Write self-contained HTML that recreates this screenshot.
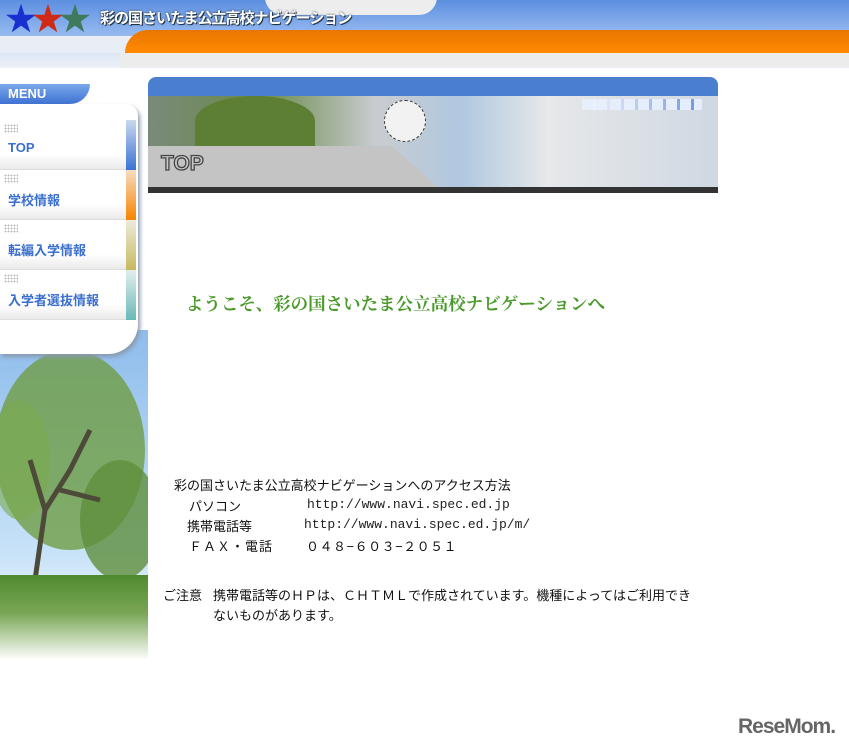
<!DOCTYPE html>
<html><head><meta charset="utf-8"><style>
*{margin:0;padding:0}
body{width:849px;height:751px;position:relative;overflow:hidden;background:#fff;font-family:"Liberation Sans","Noto Sans CJK JP",sans-serif}
.a{position:absolute}
.t{font-size:13px;color:#111;white-space:nowrap}
.m{font-family:"Liberation Mono","Noto Sans CJK JP",monospace;font-size:13px;color:#222}
.mi{left:0;width:126px;height:49px;background:linear-gradient(#fff,#fff 70%,#eaeaea);border-bottom:1px solid #ddd}
.mi span{position:absolute;left:8px;top:20px;font-size:13px;font-weight:bold;color:#3a6fcf}
.dots{position:absolute;left:4px;top:4px;width:14px;height:9px;background:radial-gradient(#bbb 40%,transparent 45%) 0 0/3px 3px}
.st{left:126px;width:10px;height:50px}
</style></head><body>
<div class="a" style="left:0;top:0;width:849px;height:68px;background:linear-gradient(#5d8fe0,#8fb5ee 45%,#c9dcf6)"></div>
<div class="a" style="left:265px;top:-20px;width:172px;height:35px;background:#ededed;border-radius:0 0 18px 18px"></div>
<div class="a" style="left:0;top:36px;width:849px;height:32px;background:#e9eef6"></div>
<div class="a" style="left:125px;top:30px;width:724px;height:23px;background:linear-gradient(#e87600,#ff8a00);border-radius:40px 0 0 0"></div>
<div class="a" style="left:100px;top:53px;width:749px;height:14px;background:#ececec"></div>
<div class="a" style="left:0;top:53px;width:120px;height:15px;background:linear-gradient(#dbe6f5,#eef2f8)"></div>
<div class="a" style="left:5px;top:3px;font-size:32px;line-height:32px;letter-spacing:-5px"><span style="color:#1a2fd0">★</span><span style="color:#cf2a16">★</span><span style="color:#3f7a5c">★</span></div>
<div class="a" style="left:100px;top:7px;font-size:15px;font-weight:bold;color:#fff;text-shadow:0 0 2px #234,1px 1px 0 #234;letter-spacing:-1px">彩の国さいたま公立高校ナビゲーション</div>
<div class="a" style="left:0;top:330px;width:148px;height:320px;background:linear-gradient(#8ebcec,#c8e2f8 70%,#fff)"></div>
<svg class="a" style="left:0;top:340px" width="148" height="320">
<defs><linearGradient id="g" x1="0" y1="0" x2="0" y2="1"><stop offset="0" stop-color="#4f8a2f"/><stop offset="0.45" stop-color="#7aa656"/><stop offset="1" stop-color="#fff"/></linearGradient></defs>
<ellipse cx="70" cy="110" rx="75" ry="100" fill="#6f9e45" opacity=".8"/>
<ellipse cx="120" cy="180" rx="40" ry="60" fill="#5f8f3c" opacity=".8"/>
<ellipse cx="20" cy="120" rx="30" ry="60" fill="#7aaa4f" opacity=".6"/>
<path d="M35 240 L45 170 L30 120 M45 170 L70 130 L90 90 M60 150 L100 160" stroke="#4d4a3a" stroke-width="5" fill="none"/>
<rect x="0" y="235" width="148" height="85" fill="url(#g)"/>
</svg>
<div class="a" style="left:0;top:80px;width:148px;height:30px;background:#fff"></div>
<div class="a" style="left:0;top:84px;width:90px;height:20px;background:linear-gradient(#7aa8ea,#3e72d2);border-radius:0 0 30px 0"></div>
<div class="a" style="left:8px;top:86px;font-size:13px;font-weight:bold;color:#fff">MENU</div>
<div class="a" style="left:0;top:104px;width:138px;height:250px;background:#fff;border-radius:0 12px 30px 0;box-shadow:2px 3px 4px #8a9ab0"></div>
<div class="a mi" style="top:120px"><div class="dots"></div><span>TOP</span></div>
<div class="a mi" style="top:170px"><div class="dots"></div><span>学校情報</span></div>
<div class="a mi" style="top:220px"><div class="dots"></div><span>転編入学情報</span></div>
<div class="a mi" style="top:270px"><div class="dots"></div><span>入学者選抜情報</span></div>
<div class="a st" style="top:120px;background:linear-gradient(#c9d8f0,#3a73d4)"></div>
<div class="a st" style="top:170px;background:linear-gradient(#f6dcc2,#f68500)"></div>
<div class="a st" style="top:220px;background:linear-gradient(#ecebdb,#c8b860)"></div>
<div class="a st" style="top:270px;background:linear-gradient(#e2eeee,#6ab8b8)"></div>
<div class="a" style="left:148px;top:77px;width:570px;height:19px;background:#4a7fd0;border-radius:8px 8px 0 0"></div>
<div class="a" style="left:148px;top:96px;width:570px;height:91px;background:linear-gradient(90deg,#7a8a7a 0,#6a8a4a 20%,#c8ccd0 40%,#b0c8e0 55%,#e6e8ea 70%,#cfd8e2 100%)"></div>
<div class="a" style="left:195px;top:96px;width:120px;height:50px;background:#5d7f34;border-radius:50% 50% 0 0"></div>
<div class="a" style="left:384px;top:100px;width:40px;height:40px;border-radius:50%;background:#f2f2f2;border:1px dashed #333"></div>
<div class="a" style="left:582px;top:99px;width:120px;height:11px;background:repeating-linear-gradient(90deg,#e8f0ff 0 11px,transparent 11px 14px),linear-gradient(90deg,#fff,#5d8fe0);opacity:.9"></div>
<div class="a" style="left:148px;top:146px;width:290px;height:41px;background:#c4c4c4;clip-path:polygon(0 0,84% 0,100% 100%,0 100%)"></div>
<div class="a" style="left:161px;top:152px;font-size:21px;font-weight:bold;color:#c8c8c8;-webkit-text-stroke:1.3px #444">TOP</div>
<div class="a" style="left:148px;top:187px;width:570px;height:6px;background:#333"></div>
<div class="a" style="left:186px;top:291px;font-family:'Liberation Serif','Noto Serif CJK SC',serif;font-weight:bold;font-size:17.5px;color:#4a9a2a;white-space:nowrap">ようこそ、彩の国さいたま公立高校ナビゲーションへ</div>
<div class="a t" style="left:174px;top:475px">彩の国さいたま公立高校ナビゲーションへのアクセス方法</div>
<div class="a t" style="left:189px;top:496px">パソコン</div>
<div class="a m" style="left:307px;top:497px">http://www.navi.spec.ed.jp</div>
<div class="a t" style="left:187px;top:516px">携帯電話等</div>
<div class="a m" style="left:304px;top:517px">http://www.navi.spec.ed.jp/m/</div>
<div class="a t" style="left:189px;top:536px;letter-spacing:1px">ＦＡＸ・電話</div>
<div class="a t" style="left:306px;top:536px;letter-spacing:0.5px">０４８−６０３−２０５１</div>
<div class="a t" style="left:163px;top:585px">ご注意</div>
<div class="a t" style="left:213px;top:585px">携帯電話等のＨＰは、ＣＨＴＭＬで作成されています。機種によってはご利用でき</div>
<div class="a t" style="left:213px;top:605px">ないものがあります。</div>
<div class="a" style="left:738px;top:715px;font-size:21px;font-weight:bold;color:#666;letter-spacing:-1px">ReseMom.</div>
</body></html>
